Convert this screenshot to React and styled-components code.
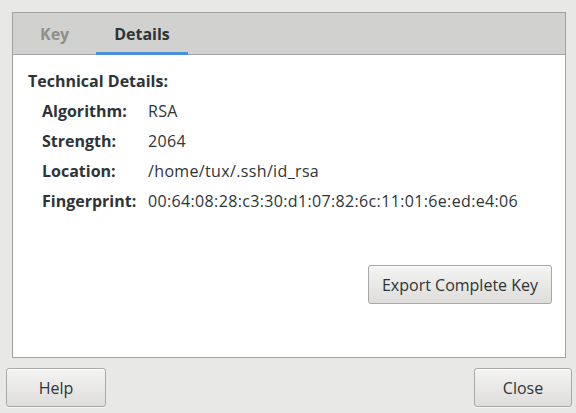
import React from 'react';
import styled, { createGlobalStyle } from 'styled-components';

const GlobalStyle = createGlobalStyle`
  html, body {
    margin: 0;
    padding: 0;
    background: #e8e8e7;
  }
  body {
    font-family: "Open Sans", "Noto Sans", sans-serif;
    font-size: 16px;
    color: #2e3436;
  }
`;

const Dialog = styled.div`
  width: 576px;
  height: 413px;
  box-sizing: border-box;
  display: flex;
  flex-direction: column;
`;

const Notebook = styled.div`
  height: 346px;
  margin: 12px 10px 0 12px;
  box-sizing: border-box;
  border: 1px solid #a1a1a1;
  background: #ffffff;
  display: flex;
  flex-direction: column;
`;

const TabBar = styled.div`
  height: 41px;
  display: flex;
  gap: 9px;
  padding-left: 9px;
  background: #d1d1cf;
  border-bottom: 1px solid #a1a1a1;
`;

const Tab = styled.div`
  position: relative;
  display: flex;
  align-items: center;
  padding: 0 18px;
  font-weight: bold;
  color: ${p => (p.active ? '#2e3436' : '#8e908c')};
  &::after {
    content: '';
    display: ${p => (p.active ? 'block' : 'none')};
    position: absolute;
    left: 0;
    right: 0;
    bottom: -1px;
    height: 3px;
    background: #4a90d9;
  }
`;

const Page = styled.div`
  flex: 1;
  display: flex;
  flex-direction: column;
  padding: 15px 13px 0 15px;
`;

const Title = styled.div`
  font-weight: bold;
  line-height: 22px;
  margin-bottom: 8px;
`;

const Grid = styled.div`
  display: grid;
  grid-template-columns: 106px auto;
  row-gap: 8px;
  padding-left: 14px;
  line-height: 22px;
`;

const Label = styled.div`
  font-weight: bold;
`;

const Value = styled.div`
  letter-spacing: 0.35px;
`;

const Button = styled.button`
  font-family: inherit;
  font-size: 16px;
  color: #2e3436;
  height: 39px;
  box-sizing: border-box;
  border: 1px solid #a8a8a8;
  border-radius: 3px;
  background: linear-gradient(to bottom, #f4f4f3, #dedddb);
  box-shadow: inset 0 1px #ffffff, 0 1px rgba(255, 255, 255, 0.6);
  padding: 0 8px;
  width: ${p => p.width}px;
`;

const PageActions = styled.div`
  display: flex;
  justify-content: flex-end;
  margin-top: 53px;
`;

const ActionArea = styled.div`
  display: flex;
  justify-content: space-between;
  padding: 10px 4px 0 6px;
`;

const details = [
  ['Algorithm:', 'RSA'],
  ['Strength:', '2064'],
  ['Location:', '/home/tux/.ssh/id_rsa'],
  ['Fingerprint:', '00:64:08:28:c3:30:d1:07:82:6c:11:01:6e:ed:e4:06'],
];

export default function App() {
  return (
    <>
      <GlobalStyle />
      <Dialog>
        <Notebook>
          <TabBar>
            <Tab>Key</Tab>
            <Tab active>Details</Tab>
          </TabBar>
          <Page>
            <Title>Technical Details:</Title>
            <Grid>
              {details.map(([k, v]) => (
                <React.Fragment key={k}>
                  <Label>{k}</Label>
                  <Value>{v}</Value>
                </React.Fragment>
              ))}
            </Grid>
            <PageActions>
              <Button width={184}>Export Complete Key</Button>
            </PageActions>
          </Page>
        </Notebook>
        <ActionArea>
          <Button width={100}>Help</Button>
          <Button width={98}>Close</Button>
        </ActionArea>
      </Dialog>
    </>
  );
}
